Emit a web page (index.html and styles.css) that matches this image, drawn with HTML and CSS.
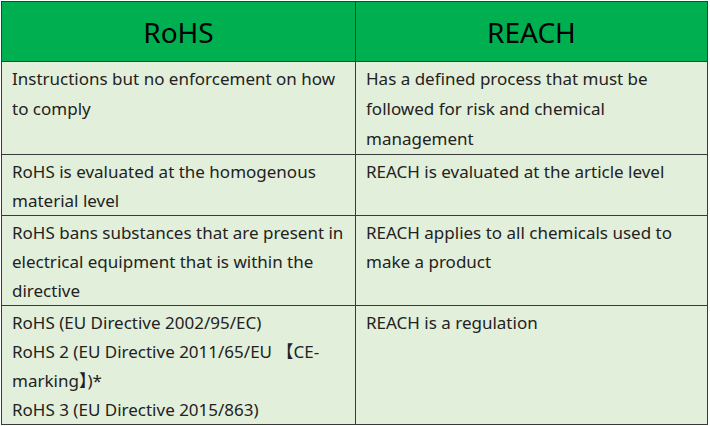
FILE: index.html
```html
<!DOCTYPE html>
<html>
<head>
<meta charset="utf-8">
<link rel="stylesheet" href="styles.css">
</head>
<body>
<table class="cmp">
  <thead>
    <tr class="head">
      <th>RoHS</th>
      <th>REACH</th>
    </tr>
  </thead>
  <tbody>
    <tr class="r1">
      <td>Instructions but no enforcement on how to comply</td>
      <td>Has a defined process that must be followed for risk and chemical management</td>
    </tr>
    <tr class="r2">
      <td>RoHS is evaluated at the homogenous material level</td>
      <td>REACH is evaluated at the article level</td>
    </tr>
    <tr class="r3">
      <td>RoHS bans substances that are present in electrical equipment that is within the directive</td>
      <td>REACH applies to all chemicals used to make a product</td>
    </tr>
    <tr class="r4">
      <td>RoHS (EU Directive 2002/95/EC)<br>RoHS 2 (EU Directive 2011/65/EU 【CE-marking】)*<br>RoHS 3 (EU Directive 2015/863)</td>
      <td>REACH is a regulation</td>
    </tr>
  </tbody>
</table>
</body>
</html>
```
FILE: styles.css
```css
html, body {
  margin: 0;
  padding: 0;
  background: #ffffff;
}
body {
  padding: 1px 0 0 1px;
  font-family: "Noto Sans", "Noto Sans CJK TC", sans-serif;
  color: #222222;
}
.cmp {
  border-collapse: collapse;
  width: 707px;
  table-layout: fixed;
}
.cmp th, .cmp td {
  border: 1px solid #3a3a3a;
  padding: 0;
}
.cmp th {
  background: #00b050;
  font-weight: 400;
  font-size: 28px;
  height: 59px;
  text-align: center;
  color: #000;
}
.cmp th:first-child, .cmp td:first-child {
  width: 353px;
}
.cmp td {
  background: #e2efda;
  font-size: 17px;
  line-height: 30px;
  vertical-align: top;
  padding: 2px 8px 0 10px;
}
.cmp td:last-child {
  padding-left: 10px;
}
.r2 td { line-height: 29px; }
.r3 td { line-height: 29px; }
.r4 td { line-height: 29px; }
```
